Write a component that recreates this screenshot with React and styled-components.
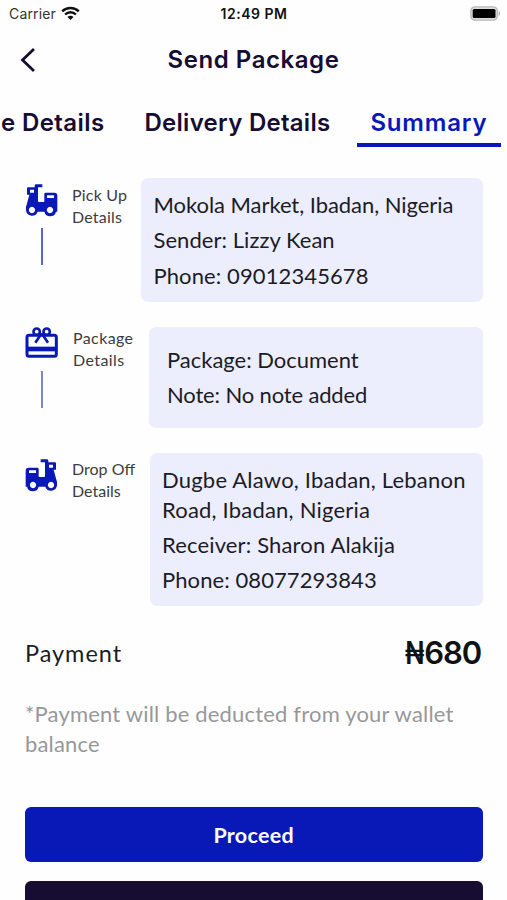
import React from "react";
import styled, { createGlobalStyle } from "styled-components";

const BLUE = "#0819b8";
const NAVY = "#170c32";

const GlobalStyle = createGlobalStyle`
  * { box-sizing: border-box; }
  html, body { margin: 0; padding: 0; background: #fefefe; }
  body { overflow: hidden; }
`;

const Screen = styled.main`
  width: 507px;
  height: 900px;
  overflow: hidden;
  display: flex;
  flex-direction: column;
  background: #fefefe;
  color: #1c1c26;
  font-family: "Lato", "Open Sans", sans-serif;
`;

const StatusBar = styled.div`
  height: 27px;
  flex: none;
  display: grid;
  grid-template-columns: 1fr auto 1fr;
  align-items: center;
  padding: 0 6px 0 9px;
  font-family: "Inter", sans-serif;
  font-size: 14px;
  color: #111;
`;

const Carrier = styled.div`
  display: flex;
  align-items: center;
  gap: 5px;
  color: #333;
  letter-spacing: 0.15px;
`;

const Clock = styled.div`
  font-weight: 600;
  letter-spacing: 0.5px;
  padding-right: 2px;
`;

const BatteryIcon = styled.svg`
  justify-self: end;
`;

const Header = styled.header`
  height: 65px;
  flex: none;
  display: grid;
  grid-template-columns: 60px 1fr 60px;
  align-items: center;
`;

const BackButton = styled.button`
  display: flex;
  border: 0;
  background: none;
  padding: 0 0 0 20px;
`;

const Title = styled.h1`
  margin: 0;
  text-align: center;
  font: 600 24px/32px "Inter", sans-serif;
  letter-spacing: 0.55px;
  color: ${NAVY};
`;

const Tabs = styled.nav`
  height: 55px;
  flex: none;
  display: flex;
  justify-content: flex-end;
  padding-right: 6px;
  gap: 13px;
`;

const Tab = styled.a`
  flex: none;
  height: 55px;
  padding: 15px 13.5px 0;
  white-space: nowrap;
  font: 600 24px/32px "Inter", sans-serif;
  letter-spacing: ${(p) => p.$spacing};
  color: ${(p) => (p.$active ? BLUE : NAVY)};
  border-bottom: 4px solid ${(p) => (p.$active ? BLUE : "transparent")};
`;

const Steps = styled.section`
  display: flex;
  flex-direction: column;
  gap: 25px;
  padding: 31px 24.5px 0 25px;
`;

const Step = styled.article`
  display: grid;
  grid-template-columns: 33px ${(p) => p.$label}px 1fr;
  column-gap: ${(p) => p.$gap}px;
`;

const Marker = styled.div`
  display: flex;
  flex-direction: column;
  align-items: center;
  padding-top: ${(p) => p.$top}px;
  gap: 11px;
`;

const Connector = styled.span`
  width: 2px;
  height: 37px;
  background: ${(p) => p.$color};
`;

const StepLabel = styled.h2`
  margin: 0;
  padding-top: ${(p) => p.$top}px;
  font-size: 16px;
  font-weight: 400;
  line-height: 22px;
  letter-spacing: ${(p) => p.$spacing}px;
  color: #3c3c40;
  white-space: nowrap;
`;

const Card = styled.div`
  display: flex;
  flex-direction: column;
  gap: 6px;
  padding: ${(p) => p.$pad};
  border-radius: 7px;
  background: #ecedfd;
`;

const Line = styled.p`
  margin: 0;
  font-size: 22px;
  line-height: 29.3px;
  letter-spacing: ${(p) => p.$spacing}px;
  white-space: nowrap;
`;

const Payment = styled.section`
  display: flex;
  justify-content: space-between;
  align-items: center;
  height: 46px;
  margin: 27px 26px 0 25px;
  font-size: 23.5px;
  letter-spacing: 0.95px;
`;

const Amount = styled.strong`
  display: flex;
  font: 600 31px/40px "Inter", sans-serif;
  letter-spacing: -1.1px;
  color: #111;
`;

const Naira = styled.span`
  transform: scaleX(0.82);
  transform-origin: right;
  margin-right: 1px;
`;

const Note = styled.p`
  margin: 26px 25px 0;
  font-size: 22px;
  line-height: 29.3px;
  letter-spacing: 0.18px;
  color: #98989a;
`;

const Actions = styled.footer`
  display: flex;
  flex-direction: column;
  gap: 19px;
  margin: 49px 24.5px 0 25px;
`;

const Button = styled.button`
  flex: none;
  height: 55px;
  border: 0;
  border-radius: 6px;
  background: ${(p) => p.$bg};
  color: #fff;
  font: 700 21.5px/28px "Lato", sans-serif;
  letter-spacing: 0.3px;
`;

function Wifi() {
  return (
    <svg width="19" height="15" viewBox="0 0 19 15" fill="none" stroke="#111" strokeWidth="2.4">
      <path d="M1.2 5.4a11.8 11.8 0 0 1 16.6 0" />
      <path d="M4.1 8.5a7.7 7.7 0 0 1 10.8 0" />
      <path d="M9.5 14 6.5 11a4.2 4.2 0 0 1 6 0z" fill="#111" stroke="none" />
    </svg>
  );
}

function Battery() {
  return (
    <BatteryIcon width="31" height="15" viewBox="0 0 31 15">
      <rect x="0.9" y="0.9" width="26.4" height="13.2" rx="4" fill="#ddd" stroke="#b9b9b9" strokeWidth="1.3" />
      <rect x="2.7" y="2.9" width="22.8" height="9.2" rx="1.5" fill="#000" />
      <path d="M28.7 5.2v4.6c1.8-.5 1.8-4.1 0-4.6z" fill="#aaa" />
    </BatteryIcon>
  );
}

function Scooter({ flipped }) {
  return (
    <svg width="33" height="33" viewBox="75 56 99 99">
      <g transform={flipped ? "translate(249 0) scale(-1 1)" : undefined}>
        <path
          fill={BLUE}
          fillRule="evenodd"
          d="M122 57h19q4 0 4 4v5h20q3 0 3 3v19h-7l8 30q4 7 2 17A18 18 0 0 1 136 139H116A18 18 0 0 1 81 139H78q-1 0-1-3V91q0-9 9-9h26q4 0 4 4v22q0 2 3 2h13q3 0 3-3V66h-13zM87 90v8h21v-8zM147 73v9h12v-9zM99 124.500a9.500 9.500 0 1 0 .1 0zM153 124.500a9.500 9.500 0 1 0 .1 0z"
        />
      </g>
    </svg>
  );
}

function Gift() {
  return (
    <svg width="33" height="33" viewBox="76 51 99 99" fill="none" stroke={BLUE}>
      <rect x="82" y="76" width="88" height="63" rx="6" strokeWidth="9" />
      <path d="M82 117h88" strokeWidth="14" />
      <g strokeWidth="8">
        <circle cx="111" cy="65" r="9.500" />
        <circle cx="141" cy="65" r="9.500" />
        <path d="M126 70 107 98M126 70l19 28" />
      </g>
    </svg>
  );
}

export default function App() {
  return (
    <>
      <GlobalStyle />
      <Screen>
        <StatusBar>
          <Carrier>Carrier <Wifi /></Carrier>
          <Clock>12:49 PM</Clock>
          <Battery />
        </StatusBar>
        <Header>
          <BackButton aria-label="Back">
            <svg width="16" height="26" viewBox="0 0 16 26" fill="none" stroke={NAVY} strokeWidth="2.8">
              <path d="M14 2 2.500 13 14 24" />
            </svg>
          </BackButton>
          <Title>Send Package</Title>
        </Header>
        <Tabs>
          <Tab $spacing="0.4px">e Details</Tab>
          <Tab $spacing="0.27px">Delivery Details</Tab>
          <Tab $active $spacing="0.82px">Summary</Tab>
        </Tabs>
        <Steps>
          <Step $label={55} $gap={14}>
            <Marker $top={6}>
              <Scooter flipped />
              <Connector $color="#5a65cd" />
            </Marker>
            <StepLabel $top={6} $spacing={0.2}>Pick Up<br />Details</StepLabel>
            <Card $pad="12px 12.500px">
              <Line $spacing={-0.05}>Mokola Market, Ibadan, Nigeria</Line>
              <Line $spacing={0.05}>Sender: Lizzy Kean</Line>
              <Line $spacing={0.1}>Phone: 09012345678</Line>
            </Card>
          </Step>
          <Step $label={61} $gap={15}>
            <Marker $top={0}>
              <Gift />
              <Connector $color="#7d85d6" />
            </Marker>
            <StepLabel $top={0} $spacing={0.4}>Package<br />Details</StepLabel>
            <Card $pad="18.200px 18px 18.600px">
              <Line $spacing={-0.02}>Package: Document</Line>
              <Line $spacing={-0.15}>Note: No note added</Line>
            </Card>
          </Step>
          <Step $label={64} $gap={14}>
            <Marker $top={6}>
              <Scooter />
            </Marker>
            <StepLabel $top={5} $spacing={0}>Drop Off<br />Details</StepLabel>
            <Card $pad="12px">
              <Line $spacing={0.2}>Dugbe Alawo, Ibadan, Lebanon<br />Road, Ibadan, Nigeria</Line>
              <Line $spacing={0.15}>Receiver: Sharon Alakija</Line>
              <Line $spacing={0.08}>Phone: 08077293843</Line>
            </Card>
          </Step>
        </Steps>
        <Payment>
          <span>Payment</span>
          <Amount><Naira>₦</Naira>680</Amount>
        </Payment>
        <Note>*Payment will be deducted from your wallet balance</Note>
        <Actions>
          <Button $bg={BLUE}>Proceed</Button>
          <Button $bg={NAVY} aria-label="Cancel" />
        </Actions>
      </Screen>
    </>
  );
}
